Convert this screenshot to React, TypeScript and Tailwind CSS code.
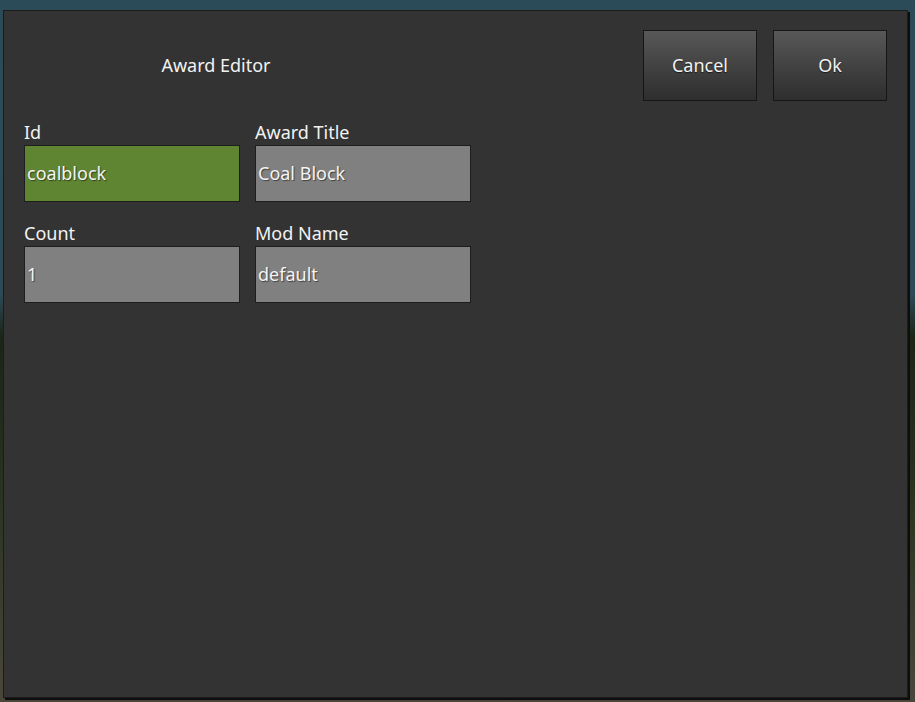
import React from "react";

type Field = { label: string; value: string; active?: boolean };

const FIELDS: Field[] = [
  { label: "Id", value: "coalblock", active: true },
  { label: "Award Title", value: "Coal Block" },
  { label: "Count", value: "1" },
  { label: "Mod Name", value: "default" },
];

function Button({ children }: { children: React.ReactNode }) {
  return (
    <button className="flex h-[71px] w-[114px] items-center justify-center border border-[#161616] bg-gradient-to-b from-[#585858] to-[#2e2e2e] text-[18px] text-[#f2f2f2] [text-shadow:0_1px_1px_rgba(0,0,0,0.6)]">
      {children}
    </button>
  );
}

export default function App() {
  return (
    <div className="h-[702px] w-[915px] overflow-hidden bg-[linear-gradient(180deg,#2c4b59_0%,#2d4a56_42%,#1b2416_48%,#2a3320_70%,#4a473a_100%)] pl-[3px] pt-[10px] font-['Noto_Sans',sans-serif]">
      <div className="flex h-[688px] w-[905px] flex-col border border-[#1c1c1c] bg-[#333333] pl-[20px] pr-[20px] pt-[19px] shadow-[2px_2px_0_#0d0d0d]">
        <div className="flex items-center">
          <div className="w-[384px] text-center text-[18px] text-[#f2f2f2]">Award Editor</div>
          <div className="flex-1" />
          <div className="flex gap-[16px]">
            <Button>Cancel</Button>
            <Button>Ok</Button>
          </div>
        </div>
        <div className="mt-[22px] grid w-[447px] grid-cols-[216px_216px] gap-x-[15px] gap-y-[22px]">
          {FIELDS.map((f) => (
            <div key={f.label} className="flex flex-col">
              <div className="h-[20px] text-[18px] leading-[18px] text-[#f2f2f2]">{f.label}</div>
              <div
                className={
                  "mt-[2px] flex h-[57px] items-center border border-[#1e1e1e] pl-[2px] text-[18px] text-[#f4f4f4] [text-shadow:1px_1px_1px_rgba(0,0,0,0.5)] " +
                  (f.active ? "bg-[#5f8532]" : "bg-[#808080]")
                }
              >
                {f.value}
              </div>
            </div>
          ))}
        </div>
      </div>
    </div>
  );
}
